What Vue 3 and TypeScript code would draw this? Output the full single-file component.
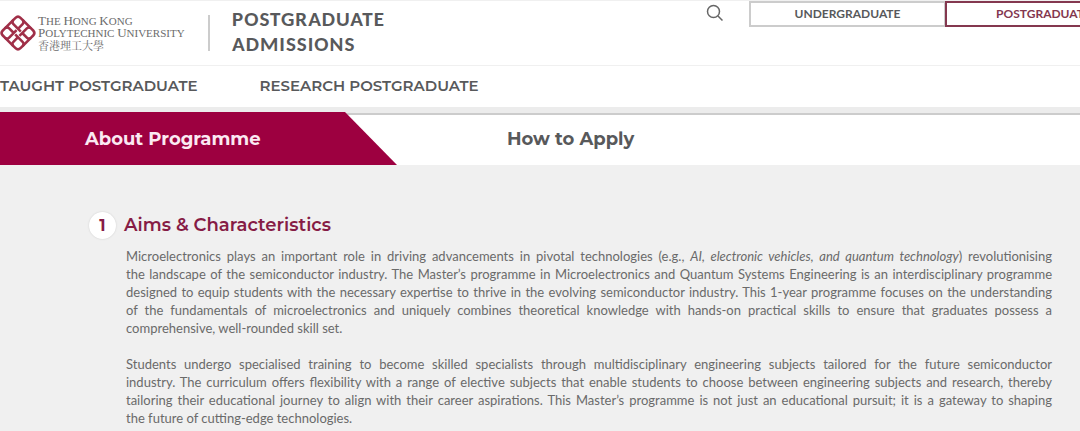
<script setup lang="ts">
interface NavLink {
  label: string
  href: string
}

const levels: NavLink[] = [
  { label: 'UNDERGRADUATE', href: '#undergraduate' },
  { label: 'POSTGRADUATE', href: '#postgraduate' },
]
const currentLevel = 'POSTGRADUATE'

const sections: NavLink[] = [
  { label: 'TAUGHT POSTGRADUATE', href: '#taught' },
  { label: 'RESEARCH POSTGRADUATE', href: '#research' },
]
</script>

<template>
  <div class="page">
    <header class="top">
      <a class="brand" href="#home" aria-label="The Hong Kong Polytechnic University">
        <svg class="emblem" viewBox="0 0 38 38" aria-hidden="true">
          <g transform="rotate(45 19 19)" fill="none" stroke="#a02f48" stroke-width="2.6">
            <path d="M16 15V9.500Q16 6.500 13 6.500H10Q6.500 6.500 6.500 10V13Q6.500 16 9.500 16H20" />
            <path d="M23 16H28.500Q31.500 16 31.500 13V10Q31.500 6.500 28 6.500H25Q22 6.500 22 9.500V20" />
            <path d="M22 23V28.500Q22 31.500 25 31.500H28Q31.500 31.500 31.500 28V25Q31.500 22 28.500 22H18" />
            <path d="M15 22H9.500Q6.500 22 6.500 25V28Q6.500 31.500 10 31.500H13Q16 31.500 16 28.500V18" />
            <path d="M13 6.500H25M31.500 13V25M25 31.500H13M6.500 25V13" />
          </g>
        </svg>
        <span class="university">
          <span class="line"><b>T</b>HE <b>H</b>ONG <b>K</b>ONG</span>
          <span class="line"><b>P</b>OLYTECHNIC <b>U</b>NIVERSITY</span>
          <span class="chinese" lang="zh-Hant">香港理工大學</span>
        </span>
      </a>
      <h1 class="title">POSTGRADUATE<br />ADMISSIONS</h1>
      <div class="tools">
        <button class="search" type="button" aria-label="Search">
          <svg viewBox="0 0 18 18" aria-hidden="true">
            <circle cx="7.500" cy="7.500" r="6" />
            <path d="M12 12L16.500 16.500" />
          </svg>
        </button>
        <nav class="levels" aria-label="Study level">
          <a
            v-for="level in levels"
            :key="level.label"
            :href="level.href"
            :class="{ current: level.label === currentLevel }"
          >{{ level.label }}</a>
        </nav>
      </div>
    </header>

    <nav class="sections" aria-label="Admissions">
      <a v-for="section in sections" :key="section.label" :href="section.href">{{ section.label }}</a>
    </nav>

    <nav class="tabs" aria-label="Programme">
      <a class="tab active" href="#about" aria-current="page">About Programme</a>
      <a class="tab" href="#apply">How to Apply</a>
    </nav>

    <main class="content">
      <h2 class="heading"><span class="number">1</span>Aims &amp; Characteristics</h2>
      <div class="copy">
        <p>
          <span>Microelectronics plays an important role in driving advancements in pivotal technologies (e.g., <em>AI, electronic vehicles, and quantum technology</em>) revolutionising</span>
          <span>the landscape of the semiconductor industry. The Master’s programme in Microelectronics and Quantum Systems Engineering is an interdisciplinary programme</span>
          <span>designed to equip students with the necessary expertise to thrive in the evolving semiconductor industry. This 1-year programme focuses on the understanding</span>
          <span>of the fundamentals of microelectronics and uniquely combines theoretical knowledge with hands-on practical skills to ensure that graduates possess a</span>
          <span>comprehensive, well-rounded skill set.</span>
        </p>
        <p>
          <span>Students undergo specialised training to become skilled specialists through multidisciplinary engineering subjects tailored for the future semiconductor</span>
          <span>industry. The curriculum offers flexibility with a range of elective subjects that enable students to choose between engineering subjects and research, thereby</span>
          <span>tailoring their educational journey to align with their career aspirations. This Master’s programme is not just an educational pursuit; it is a gateway to shaping</span>
          <span>the future of cutting-edge technologies.</span>
        </p>
      </div>
    </main>
  </div>
</template>

<style>
body {
  margin: 0;
  background: #f0f0f0;
}
</style>

<style scoped>
.page {
  min-height: 100vh;
  overflow: hidden;
  background: #f0f0f0;
  color: #58595b;
  font-family: Lato, "Noto Sans CJK TC", sans-serif;
}

a {
  color: inherit;
  text-decoration: none;
}

.top {
  display: flex;
  align-items: flex-start;
  height: 66px;
  background: #fff;
  border-top: 1px solid #f0f0f0;
  border-bottom: 1px solid #f0f0f0;
  box-sizing: border-box;
}

.brand {
  display: flex;
  flex: none;
  align-items: center;
  width: 208px;
  height: 36px;
  margin-top: 14px;
  border-right: 2px solid #ccc;
}

.emblem {
  flex: none;
  width: 38px;
  height: 38px;
  margin-left: -1px;
}

.university {
  display: flex;
  flex-direction: column;
  margin-left: 1px;
  color: #6b6b6b;
  font-family: "Liberation Serif", serif;
  font-size: 11px;
  line-height: 12px;
  white-space: nowrap;
}

.university b {
  font-size: 13px;
  font-weight: 400;
}

.chinese {
  font-family: "Noto Serif CJK TC", "Noto Sans CJK TC", sans-serif;
  font-size: 11px;
}

.title {
  flex: none;
  margin: 6px 0 0 22px;
  font-family: Carlito, "Open Sans", sans-serif;
  font-size: 21px;
  line-height: 25px;
  font-weight: 700;
  letter-spacing: 1px;
}

.tools {
  display: flex;
  flex: none;
  margin-left: auto;
  margin-right: -62px;
}

.search {
  width: 18px;
  height: 18px;
  margin: 3px 25px 0 0;
  padding: 0;
  border: 0;
  background: none;
}

.search svg {
  display: block;
  fill: none;
  stroke: #666;
  stroke-width: 1.5;
}

.levels {
  display: flex;
}

.levels a {
  width: 197px;
  height: 26px;
  box-sizing: border-box;
  border: 2px solid #ccc;
  font-size: 12px;
  line-height: 21px;
  font-weight: 700;
  text-align: center;
}

.levels a.current {
  margin-left: -1px;
  border-color: #84384f;
  color: #84384f;
}

.sections {
  display: flex;
  gap: 62px;
  height: 41px;
  background: #fff;
  font-family: Montserrat, Inter, sans-serif;
  font-size: 15px;
  line-height: 40px;
  font-weight: 600;
}

.tabs {
  display: flex;
  height: 53px;
  padding-top: 5px;
  background: linear-gradient(#ececec 6px, #ccc 6px, #ccc 8px, #fff 8px);
  font-family: Montserrat, Inter, sans-serif;
  font-size: 18px;
  line-height: 54px;
  font-weight: 700;
}

.tab {
  padding-left: 110px;
}

.tab.active {
  width: 397px;
  box-sizing: border-box;
  padding-left: 85px;
  background: #9d0040;
  color: #fbe9f2;
  clip-path: polygon(0 0, 345px 0, 100% 100%, 0 100%);
}

.content {
  padding: 46px 28px 4px 89px;
}

.heading {
  display: flex;
  align-items: center;
  gap: 8px;
  margin: 0;
  color: #861c45;
  font-family: Montserrat, Inter, sans-serif;
  font-size: 18px;
  line-height: 28px;
  font-weight: 600;
}

.number {
  width: 27px;
  height: 27px;
  border-radius: 50%;
  background: #fff;
  box-shadow: 0 0 2px #ccc;
  font-size: 16px;
  line-height: 27px;
  font-weight: 700;
  text-align: center;
}

.copy {
  margin: 8px 0 0 37px;
  color: #6a6a6a;
  font-size: 13px;
  line-height: 18px;
}

.copy p {
  margin: 0 0 18px;
}

.copy p:last-child {
  margin-bottom: 0;
}

.copy span {
  display: block;
  text-align: justify;
  text-align-last: justify;
}

.copy span:last-child {
  text-align-last: left;
}
</style>
